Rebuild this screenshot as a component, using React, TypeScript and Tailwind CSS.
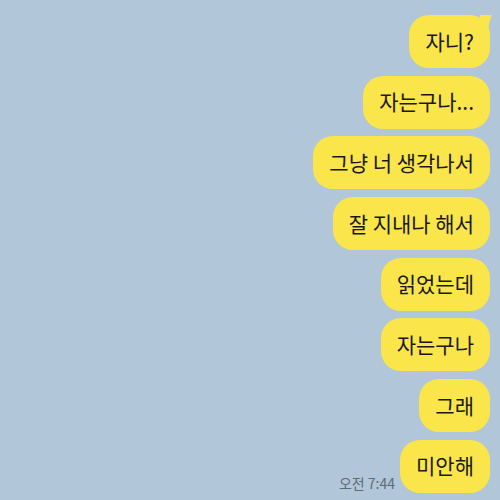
import React from "react";

const msgs = ["자니?", "자는구나...", "그냥 너 생각나서", "잘 지내나 해서", "읽었는데", "자는구나", "그래", "미안해"];

function Bubble({ text, tail }: { text: string; tail?: boolean }) {
  return (
    <div className="relative h-[53px] rounded-[20px] bg-[#fae54a] px-[16px] flex items-center text-[21px] text-[#181818] leading-none">
      <span className="-mt-[1px]">{text}</span>
      {tail && (
        <svg className="absolute right-[-4px] top-0" width="14" height="18" viewBox="0 0 14 18">
          <path d="M0 0 L12 0 Q9 6 8 16 L0 16 Z" fill="#fae54a" />
        </svg>
      )}
    </div>
  );
}

export default function App() {
  return (
    <div
      className="w-[500px] h-[500px] bg-[#b1c6d8] overflow-hidden flex flex-col items-end pr-[10px] pt-[15px] gap-[7.7px]"
      style={{ fontFamily: '"Noto Sans CJK KR", "Noto Sans", sans-serif' }}
    >
      {msgs.slice(0, 7).map((m, i) => (
        <Bubble key={i} text={m} tail={i === 0} />
      ))}
      <div className="flex items-end gap-[5px]">
        <span className="text-[14px] text-[#5d6b79] leading-none mb-[3px]">오전 7:44</span>
        <Bubble text={msgs[7]} />
      </div>
    </div>
  );
}
